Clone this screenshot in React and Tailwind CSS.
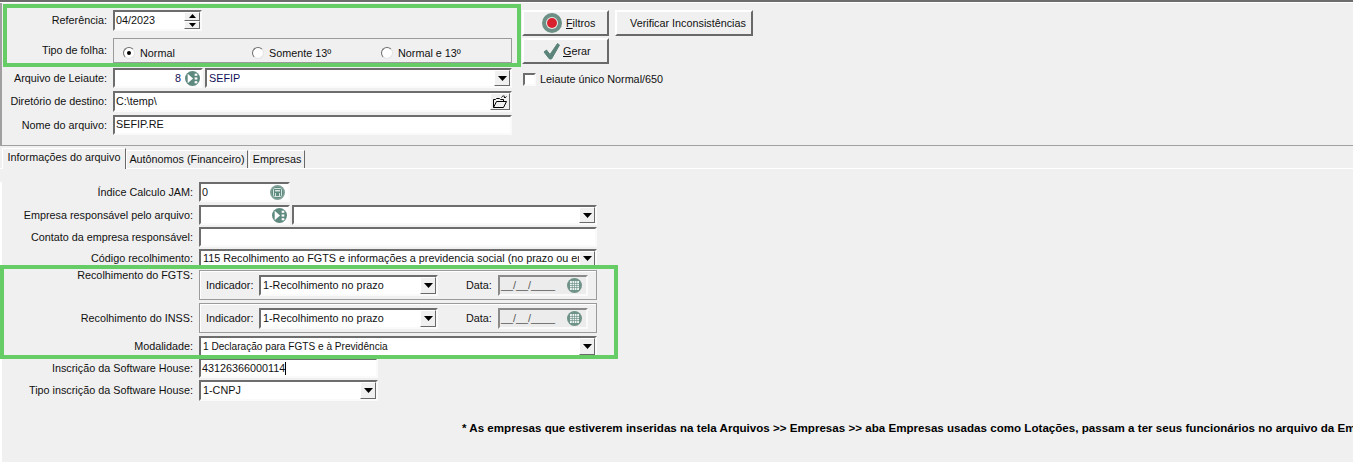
import { useState } from 'react'

const sunken = 'border-2 border-t-[#6d6d6d] border-l-[#6d6d6d] border-r-[#fafafa] border-b-[#fafafa] bg-white'
const raised = 'border border-t-white border-l-white border-r-[#696969] border-b-[#696969] bg-[#f0f0f0]'

function Arrow() {
  return (
    <svg width="9" height="5" viewBox="0 0 9 5">
      <path d="M0 0h9L4.500 5z" fill="#000" />
    </svg>
  )
}

function Combo({ value, width, blue, textSize }) {
  return (
    <div className={`flex h-full items-center justify-between ${sunken} ${width}`}>
      <span className={`overflow-hidden whitespace-nowrap pl-[2px] ${textSize || ''} ${blue ? 'text-[#12125a]' : ''}`}>{value}</span>
      <span className={`flex h-full w-[16px] shrink-0 items-center justify-center ${raised}`}>
        <Arrow />
      </span>
    </div>
  )
}

function LookupIcon() {
  return (
    <svg width="15" height="15" viewBox="0 0 14 14">
      <circle cx="7" cy="7" r="7" fill="#5f8a80" />
      <path d="M2.500 2.500v9L7.500 7z" fill="#fff" />
      <rect x="9" y="2.500" width="2.500" height="2" fill="#fff" />
      <rect x="9" y="6" width="2.500" height="2" fill="#fff" />
      <rect x="9" y="9.500" width="2.500" height="2" fill="#fff" />
    </svg>
  )
}

function CalcIcon() {
  return (
    <svg width="15" height="15" viewBox="0 0 15 15">
      <circle cx="7.500" cy="7.500" r="7.500" fill="#7fa198" />
      <circle cx="7.500" cy="7.500" r="5.800" fill="#5f8a80" />
      <rect x="3.500" y="3.500" width="8" height="8" rx="1" fill="none" stroke="#d7e4e0" />
      <rect x="5" y="5" width="5" height="1.500" fill="#d7e4e0" />
      <path d="M5.500 8v3M9.500 8v3" stroke="#d7e4e0" />
    </svg>
  )
}

function CalendarIcon() {
  return (
    <svg width="15" height="15" viewBox="0 0 15 15">
      <circle cx="7.500" cy="7.500" r="7.500" fill="#6f9389" />
      <path d="M3 3h9v9H3z" fill="#eef3f1" />
      <path d="M3 5.500h9M3 7.500h9M3 9.500h9M5.250 3v9M7.500 3v9M9.750 3v9" stroke="#6f9389" strokeWidth="0.7" />
    </svg>
  )
}

function FilterIcon() {
  return (
    <svg width="20" height="20" viewBox="0 0 20 20">
      <circle cx="10" cy="10" r="10" fill="#6c8f86" />
      <circle cx="10" cy="10" r="6" fill="#e8ecea" />
      <circle cx="10" cy="10" r="5" fill="#d8232f" />
    </svg>
  )
}

function CheckIcon() {
  return (
    <svg width="19" height="19" viewBox="0 0 19 19">
      <path d="M2 10l2.500-2 3.500 4.500L15.500 1.500l2 1.500-8 14h-2z" fill="#5b8379" stroke="#5b8379" strokeLinejoin="round" />
    </svg>
  )
}

function FolderIcon() {
  return (
    <svg width="16" height="14" viewBox="0 0 16 14" fill="none" stroke="#000">
      <path d="M1.500 12.500v-8h2l1-1h3l1 1h3v2" />
      <path d="M1.500 12.500h10l3-6h-10z" fill="#f0f0f0" />
      <path d="M9.500 2.500c1-2 3-2 4 0M13.500 2.500l1-1M13.500 2.500h-1.500" />
    </svg>
  )
}

function Radio({ label, checked, width }) {
  return (
    <div className={`flex items-center gap-[5px] ${width}`}>
      <span className="flex h-[12px] w-[12px] items-center justify-center rounded-full border border-t-[#6d6d6d] border-l-[#6d6d6d] border-r-[#e3e3e3] border-b-[#e3e3e3] bg-white">
        {checked && <span className="h-[4px] w-[4px] rounded-full bg-black" />}
      </span>
      <span>{label}</span>
    </div>
  )
}

function Row({ label, labelWidth, height, top, children }) {
  return (
    <div className={`flex ${height} ${top}`}>
      <div className={`flex shrink-0 items-center justify-end pr-[6px] ${labelWidth}`}>{label}</div>
      {children}
    </div>
  )
}

function PayBlock({ label, top, labelTop }) {
  return (
    <div className={`flex h-[30px] ${top}`}>
      <div className={`w-[197px] shrink-0 pr-[6px] text-right ${labelTop}`}>{label}</div>
      <div className="flex h-[30px] w-[398px] items-center border border-[#9b9b9b] shadow-[inset_1px_1px_0_#fff]">
        <span className="ml-[6px] w-[53px]">Indicador:</span>
        <div className="h-[21px]">
          <Combo value="1-Recolhimento no prazo" width="w-[179px]" />
        </div>
        <span className="ml-[28px] w-[32px]">Data:</span>
        <div className="flex h-[21px] w-[90px] items-center justify-between border-2 border-t-[#8a8a8a] border-l-[#8a8a8a] border-r-[#fafafa] border-b-[#fafafa] bg-[#ececec] pl-[1px] pr-[4px] text-[#555]">
          <span>__/__/____</span>
          <CalendarIcon />
        </div>
      </div>
    </div>
  )
}

export default function App() {
  const [note] = useState('* As empresas que estiverem inseridas na tela Arquivos >> Empresas >> aba Empresas usadas como Lotações, passam a ter seus funcionários no arquivo da Empresa')

  return (
    <div className="relative h-[462px] w-[1353px] overflow-hidden bg-[#f0f0f0] font-['Liberation_Sans',sans-serif] text-[10.8px] leading-[15px] text-[#111]">
      <div className="h-[3px] border-t-2 border-b border-t-[#6d6d6d] border-b-white" />

      {/* cabecalho */}
      <div className="flex h-[143px] border-b border-l-2 border-b-[#a0a0a0] border-l-[#a0a0a0]">
        <div className="w-[512px] shrink-0">
          <Row label="Referência:" labelWidth="w-[111px]" height="h-[21px]" top="mt-[7px]">
            <div className={`flex w-[89px] items-center justify-between pl-[1px] ${sunken}`}>
              <span>04/2023</span>
              <div className="flex h-full w-[16px] flex-col">
                <span className={`flex h-1/2 items-center justify-center ${raised}`}><svg width="7" height="4" viewBox="0 0 7 4"><path d="M3.500 0L7 4H0z" /></svg></span>
                <span className={`flex h-1/2 items-center justify-center ${raised}`}><svg width="7" height="4" viewBox="0 0 7 4"><path d="M0 0h7L3.500 4z" /></svg></span>
              </div>
            </div>
          </Row>
          <Row label="Tipo de folha:" labelWidth="w-[111px]" height="h-[26px]" top="mt-[6px]">
            <div className="mt-[1px] flex h-[25px] w-[399px] items-center border border-[#9b9b9b] pl-[9px] pt-[5px]">
              <Radio label="Normal" checked width="w-[129px]" />
              <Radio label="Somente 13º" width="w-[129px]" />
              <Radio label="Normal e 13º" />
            </div>
          </Row>
          <Row label="Arquivo de Leiaute:" labelWidth="w-[111px]" height="h-[20px]" top="mt-[5px]">
            <div className={`flex w-[90px] items-center justify-end gap-[4px] pr-[1px] ${sunken}`}>
              <span className="text-[#12125a]">8</span>
              <LookupIcon />
            </div>
            <div className="ml-[2px]">
              <Combo value="SEFIP" width="w-[307px]" blue />
            </div>
          </Row>
          <Row label="Diretório de destino:" labelWidth="w-[111px]" height="h-[21px]" top="mt-[3px]">
            <div className={`flex w-[399px] items-center justify-between pl-[1px] ${sunken}`}>
              <span>C:\temp\</span>
              <span className={`flex h-full w-[20px] items-center justify-center ${raised}`}><FolderIcon /></span>
            </div>
          </Row>
          <Row label="Nome do arquivo:" labelWidth="w-[111px]" height="h-[20px]" top="mt-[3px]">
            <div className={`w-[399px] pl-[1px] ${sunken}`}>SEFIP.RE</div>
          </Row>
        </div>

        <div className="ml-[8px] w-[240px]">
          <div className="mt-[7px] flex gap-[6px]">
            <button className={`flex h-[26px] w-[87px] items-center gap-[4px] pl-[18px] ${raised} border-2`}>
              <FilterIcon />
              <span><u>F</u>iltros</span>
            </button>
            <button className={`h-[26px] w-[138px] pl-[8px] ${raised} border-2`}>Verificar Inconsistências</button>
          </div>
          <button className={`mt-[2px] flex h-[26px] w-[87px] items-center gap-[2px] pl-[18px] ${raised} border-2`}>
            <CheckIcon />
            <span><u>G</u>erar</span>
          </button>
          <div className="mt-[8px] flex items-center gap-[4px] pl-[1px]">
            <span className={`h-[13px] w-[13px] ${sunken}`} />
            <span>Leiaute único Normal/650</span>
          </div>
        </div>
      </div>

      {/* abas */}
      <div className="mt-[2px] flex h-[21px] items-end whitespace-nowrap border-b border-b-white pl-[2px]">
        <div className="z-10 -mb-px flex h-[21px] w-[124px] items-center justify-center border-t border-l border-r border-t-white border-l-white border-r-[#696969] bg-[#f0f0f0] pb-[3px]">Informações do arquivo</div>
        <div className="flex h-[18px] w-[122px] items-center justify-center border-t border-l border-r border-t-white border-l-white border-r-[#696969]">Autônomos (Financeiro)</div>
        <div className="ml-[1px] flex h-[18px] w-[56px] items-center justify-center border-t border-l border-r border-t-white border-l-white border-r-[#696969]">Empresas</div>
      </div>

      {/* informacoes do arquivo */}
      <div className="h-[294px] border-l-2 border-l-white">
        <Row label="Índice Calculo JAM:" labelWidth="w-[197px]" height="h-[20px]" top="mt-[13px]">
          <div className={`flex w-[91px] items-center justify-between pl-[1px] pr-[3px] ${sunken}`}>
            <span>0</span>
            <CalcIcon />
          </div>
        </Row>
        <Row label="Empresa responsável pelo arquivo:" labelWidth="w-[197px]" height="h-[20px]" top="mt-[3px]">
          <div className={`flex w-[91px] items-center justify-end pr-[1px] ${sunken}`}>
            <LookupIcon />
          </div>
          <div className="ml-[2px]">
            <Combo value="" width="w-[305px]" />
          </div>
        </Row>
        <Row label="Contato da empresa responsável:" labelWidth="w-[197px]" height="h-[20px]" top="mt-[2px]">
          <div className={`w-[398px] ${sunken}`} />
        </Row>
        <Row label="Código recolhimento:" labelWidth="w-[197px]" height="h-[19px]" top="mt-[2px]">
          <Combo value="115 Recolhimento ao FGTS e informações a previdencia social (no prazo ou em atraso)" width="w-[398px]" />
        </Row>
        <PayBlock label="Recolhimento do FGTS:" top="mt-[2px]" labelTop="-mt-[2px]" />
        <PayBlock label="Recolhimento do INSS:" top="mt-[3px]" labelTop="mt-[8px]" />
        <Row label="Modalidade:" labelWidth="w-[197px]" height="h-[21px]" top="mt-[3px]">
          <Combo value="1 Declaração para FGTS e à Previdência" width="w-[398px]" textSize="text-[10.1px]" />
        </Row>
        <Row label="Inscrição da Software House:" labelWidth="w-[197px]" height="h-[20px]" top="mt-[1px]">
          <div className={`flex w-[179px] items-center pl-[1px] ${sunken}`}>
            <span>43126366000114</span>
            <span className="h-[13px] w-px bg-black" />
          </div>
        </Row>
        <Row label="Tipo inscrição da Software House:" labelWidth="w-[197px]" height="h-[21px]" top="mt-[2px]">
          <Combo value="1-CNPJ" width="w-[179px]" />
        </Row>
        <p className="mt-[19px] whitespace-nowrap pl-[460px] text-[11.6px] font-bold text-black">{note}</p>
      </div>

      {/* destaques */}
      <div className="absolute left-[3px] top-[4px] h-[63px] w-[518px] border-[4px] border-[#66cc66]" />
      <div className="absolute left-0 top-[265px] h-[94px] w-[618px] border-[4px] border-[#66cc66]" />
    </div>
  )
}
